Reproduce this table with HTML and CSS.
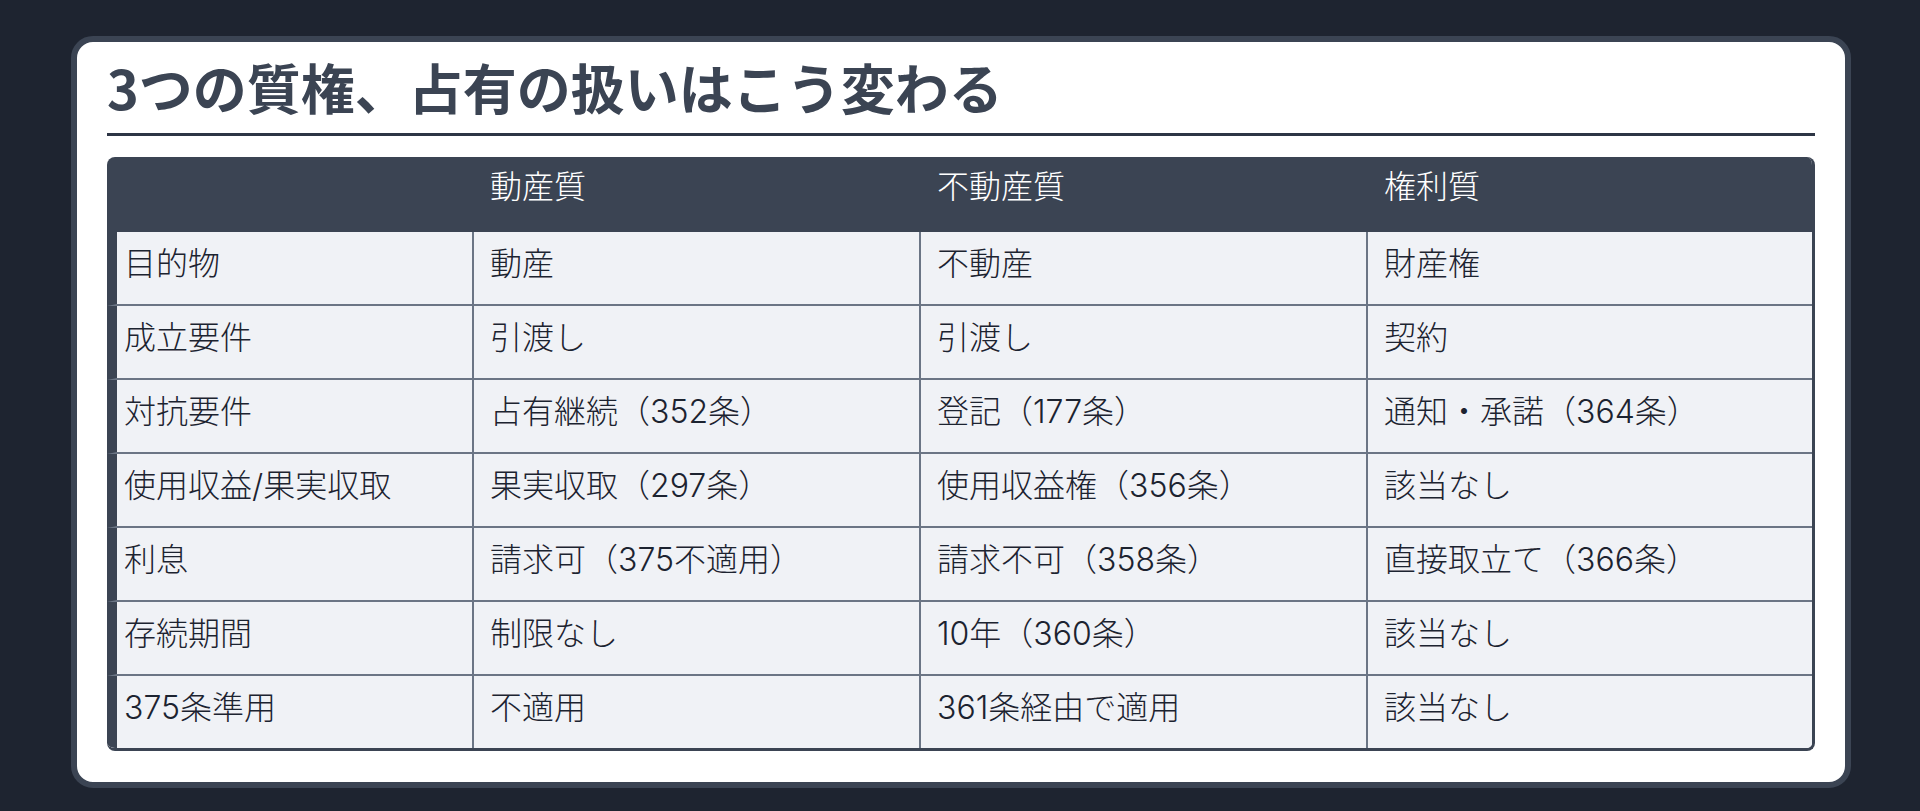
FILE: index.html
```html
<!DOCTYPE html>
<html lang="ja">
<head>
<meta charset="utf-8">
<title>3つの質権、占有の扱いはこう変わる</title>
<link rel="stylesheet" href="styles.css">
</head>
<body>
<div class="card">
  <h1 class="title">3つの質権、占有の扱いはこう変わる</h1>
  <div class="table-wrap">
    <table class="grid">
      <colgroup>
        <col class="c1"><col class="c2"><col class="c3"><col class="c4">
      </colgroup>
      <thead>
        <tr><th></th><th>動産質</th><th>不動産質</th><th>権利質</th></tr>
      </thead>
      <tbody>
        <tr><td>目的物</td><td>動産</td><td>不動産</td><td>財産権</td></tr>
        <tr><td>成立要件</td><td>引渡し</td><td>引渡し</td><td>契約</td></tr>
        <tr><td>対抗要件</td><td>占有継続（352条）</td><td>登記（177条）</td><td>通知・承諾（364条）</td></tr>
        <tr><td>使用収益/果実収取</td><td>果実収取（297条）</td><td>使用収益権（356条）</td><td>該当なし</td></tr>
        <tr><td>利息</td><td>請求可（375不適用）</td><td>請求不可（358条）</td><td>直接取立て（366条）</td></tr>
        <tr><td>存続期間</td><td>制限なし</td><td>10年（360条）</td><td>該当なし</td></tr>
        <tr><td>375条準用</td><td>不適用</td><td>361条経由で適用</td><td>該当なし</td></tr>
      </tbody>
    </table>
  </div>
</div>
</body>
</html>
```
FILE: styles.css
```css
html, body {
  margin: 0;
  padding: 0;
  background: #1e2430;
}
body {
  padding: 36px 69px 0 71px;
  font-family: "Noto Sans CJK JP", "Noto Sans", sans-serif;
}
.card {
  background: #ffffff;
  border: 6px solid #3b4453;
  border-radius: 22px;
  padding: 10px 30px 31px 30px;
}
.title {
  margin: 0 0 21px 0;
  font-size: 54px;
  line-height: 70px;
  font-weight: 700;
  color: #3b4453;
  padding-bottom: 11px;
  border-bottom: 3px solid #2d3545;
}
.table-wrap {
  border-radius: 8px;
  overflow: hidden;
  border-right: 3px solid #3b4453;
  border-bottom: 3px solid #3b4453;
}
.grid {
  width: 100%;
  border-collapse: separate;
  border-spacing: 0;
  table-layout: fixed;
  font-family: Inter, "Noto Sans CJK JP", sans-serif;
  font-size: 32px;
  font-weight: 300;
  line-height: 44px;
}
.c1 { width: 367px; }
.c2 { width: 447px; }
.c3 { width: 447px; }
.grid th {
  background: #3b4453;
  color: #ffffff;
  font-weight: 300;
  text-align: left;
  padding: 8px 16px 23px 16px;
}
.grid td {
  background: #f0f2f6;
  color: #1c2330;
  padding: 10px 16px 18px 16px;
  border-bottom: 2px solid #6b7585;
  border-right: 2px solid #6b7585;
}
.grid td:first-child {
  border-left: 10px solid #3b4453;
  padding-left: 7px;
}
.grid td:last-child {
  border-right: 0;
}
.grid tbody tr:last-child td {
  border-bottom: 0;
}
```
